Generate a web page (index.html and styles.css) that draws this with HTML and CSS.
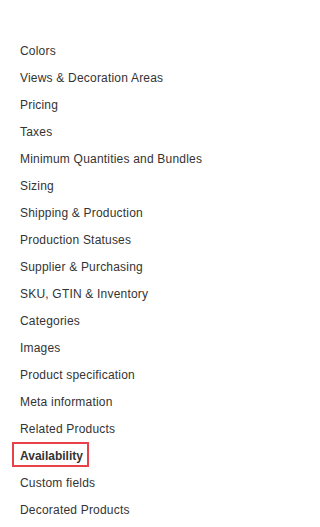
FILE: index.html
```html
<!DOCTYPE html>
<html>
<head>
<meta charset="utf-8">
<link rel="stylesheet" href="styles.css">
</head>
<body>
<ul class="menu">
  <li class="item">Colors</li>
  <li class="item">Views &amp; Decoration Areas</li>
  <li class="item">Pricing</li>
  <li class="item">Taxes</li>
  <li class="item">Minimum Quantities and Bundles</li>
  <li class="item">Sizing</li>
  <li class="item">Shipping &amp; Production</li>
  <li class="item">Production Statuses</li>
  <li class="item">Supplier &amp; Purchasing</li>
  <li class="item">SKU, GTIN &amp; Inventory</li>
  <li class="item">Categories</li>
  <li class="item">Images</li>
  <li class="item">Product specification</li>
  <li class="item">Meta information</li>
  <li class="item">Related Products</li>
  <li class="item active">Availability</li>
  <li class="item">Custom fields</li>
  <li class="item">Decorated Products</li>
</ul>
</body>
</html>
```
FILE: styles.css
```css
html, body {
  margin: 0;
  padding: 0;
  background: #ffffff;
}
.menu {
  list-style: none;
  margin: 0;
  padding: 38px 0 0 20px;
  font-family: "Liberation Sans", Arial, sans-serif;
  font-size: 12px;
  letter-spacing: 0.2px;
  color: #333333;
}
.item {
  height: 27px;
  line-height: 27px;
  white-space: nowrap;
  position: relative;
}
.item.active {
  font-weight: bold;
  letter-spacing: 0;
}
.item.active::after {
  content: "";
  position: absolute;
  left: -8px;
  top: -1px;
  width: 73px;
  height: 21px;
  border: 2px solid #e8414a;
}
```
